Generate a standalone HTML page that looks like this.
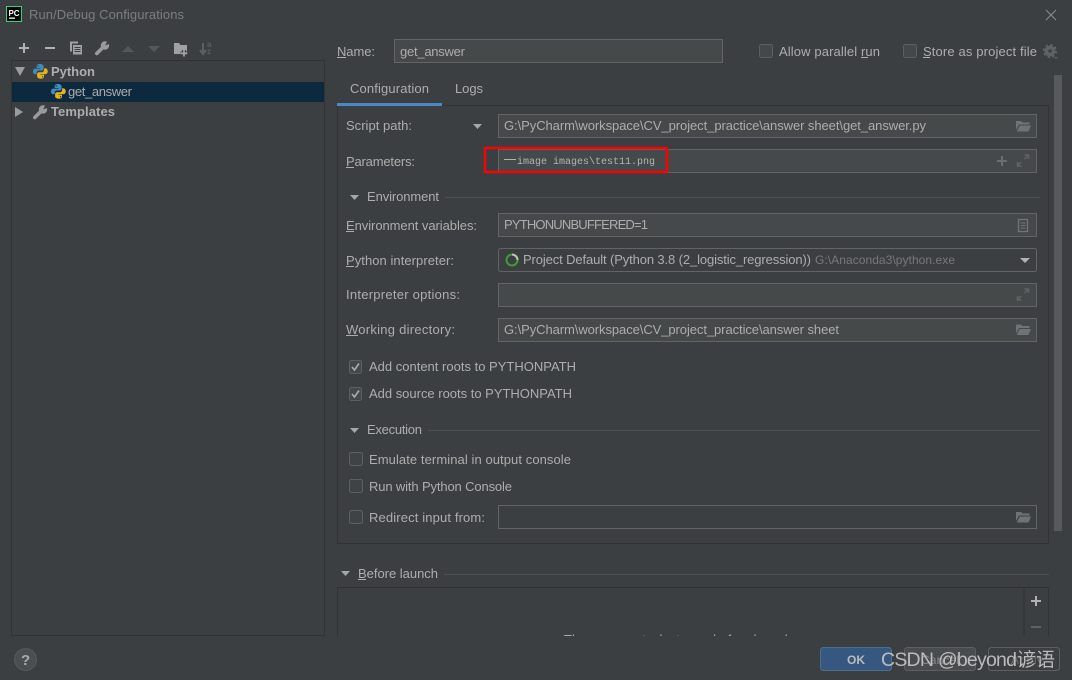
<!DOCTYPE html>
<html><head><meta charset="utf-8"><style>
html,body{margin:0;padding:0;background:#3c3f41;width:1072px;height:680px;overflow:hidden}
svg{display:block}
text{font-family:"Liberation Sans","Noto Sans CJK SC",sans-serif;font-size:13px;fill:#adadad}
.d{fill:#787878}
.b{font-weight:bold}
</style></head><body>
<svg width="1072" height="680" viewBox="0 0 1072 680" xmlns="http://www.w3.org/2000/svg">
<defs>
<clipPath id="cl"><rect x="330" y="580" width="730" height="56"/></clipPath>
<g id="py">
<path d="M7.6 0C4.4 0 4 1.4 4 2.5V4.400h4v.6H2.500C1 5 0 6.200 0 8s1 3.200 2.500 3.200H4V9.300c0-1.300 1-2.300 2.300-2.300h3.200c1.100 0 2-.9 2-2V2.500C11.500 1 9.800 0 7.600 0zM5.600 1.300a.7.700 0 1 1 0 1.500.7.700 0 0 1 0-1.500z" fill="#3d8ebf"/>
<path d="M8.400 16c3.200 0 3.600-1.400 3.600-2.500V11.600H8V11h5.500C15 11 16 9.800 16 8s-1-3.200-2.500-3.200H12v1.900c0 1.300-1 2.300-2.300 2.300H6.500c-1.100 0-2 .9-2 2v2.500C4.500 15 6.200 16 8.400 16zM10.400 14.700a.7.700 0 1 1 0-1.500.7.700 0 0 1 0 1.500z" fill="#e6b31c"/>
</g>
<g id="folder">
<path d="M0 1h5l1.500 1.500h7v2H3L0 10z" fill="#6e7375"/>
<path d="M3.700 5.500H15L12.500 11.500H.8z" fill="#6e7375"/>
</g>
<g id="expand" stroke="#5f6365" stroke-width="1.500" fill="none">
<path d="M8 5L11.500 1.500M8 1h4v4"/><path d="M4.500 8L1 11.500M1 8v4h4"/>
</g>
<g id="wrench">
<path d="M1.800 12.500L8.500 5.800" stroke="#9a9a9a" stroke-width="3.600" stroke-linecap="round" fill="none"/>
<circle cx="10" cy="4.500" r="4.200" fill="#9a9a9a"/>
<path d="M10.200 4.300L12.800 -1L16 2.500z" fill="#3c3f41"/>
</g>
</defs>

<rect width="1072" height="680" fill="#3c3f41"/>

<!-- title bar -->
<rect x="6.500" y="6.500" width="15" height="15" fill="#000" stroke="#21d789"/>
<text x="8.500" y="16" style="font-size:8px;font-weight:bold;fill:#fff" textLength="11">PC</text>
<rect x="9" y="17.500" width="6" height="1.300" fill="#fff"/>
<text x="29" y="19" class="d" textLength="155" style="fill:#7d7d7d">Run/Debug Configurations</text>
<path d="M1046 10l10 10M1056 10l-10 10" stroke="#8a8c8e" stroke-width="1" fill="none"/>

<!-- toolbar -->
<path d="M19 48h10M24 43v10" stroke="#afb1b3" stroke-width="2"/>
<path d="M45 48h10" stroke="#afb1b3" stroke-width="2"/>
<path d="M70 41.500h8v2h-6v8h-2z" fill="#9fa1a3"/>
<rect x="73" y="45" width="9" height="9.500" fill="#9fa1a3"/>
<path d="M74.500 47.500h6M74.500 49.500h6M74.500 51.500h6" stroke="#3c3f41" stroke-width="1"/>
<use href="#wrench" x="95" y="41"/>
<path d="M122 52l6-6 6 6z" fill="#55585a"/>
<path d="M148 46l6 6 6-6z" fill="#55585a"/>
<path d="M174 43h5l1.500 2h6.500v9h-13z" fill="#9fa1a3"/>
<path d="M184 50v7M180.500 53.500h7" stroke="#3c3f41" stroke-width="4"/>
<path d="M184 50v6.500M180.800 53.300h6.500" stroke="#9fa1a3" stroke-width="1.800"/>
<path d="M203 43v10M200 50l3 4 3-4" stroke="#5d6062" stroke-width="2" fill="none"/>
<text x="207" y="47" style="font-size:8px;font-weight:bold;fill:#5d6062">a</text>
<text x="207" y="54" style="font-size:8px;font-weight:bold;fill:#5d6062">z</text>

<!-- tree -->
<rect x="11.500" y="60.500" width="313" height="575" fill="#3c3f41" stroke="#323232"/>
<rect x="12" y="82" width="312" height="20" fill="#0d293e"/>
<path d="M15 67h10l-5 9z" fill="#9a9c9e"/>
<use href="#py" transform="translate(33,64) scale(.92)"/>
<text x="51" y="76" class="b" textLength="44">Python</text>
<use href="#py" transform="translate(51,84) scale(.92)"/>
<text x="68" y="96" textLength="64">get_answer</text>
<path d="M15 107v10l8-5z" fill="#9a9c9e"/>
<use href="#wrench" x="33" y="105"/>
<text x="51" y="116" class="b" textLength="64">Templates</text>

<!-- name row -->
<text x="337" y="56" textLength="38">Name:</text>
<rect x="337" y="57" width="9" height="1" fill="#adadad"/>
<rect x="394.500" y="39.500" width="328" height="23" fill="#45494a" stroke="#646464"/>
<text x="400" y="56" textLength="65">get_answer</text>
<rect x="759.500" y="44.500" width="13" height="13" rx="2" fill="#43494a" stroke="#5e6060"/>
<text x="779" y="56" textLength="101">Allow parallel run</text>
<rect x="861" y="57" width="7" height="1" fill="#adadad"/>
<rect x="903.500" y="44.500" width="13" height="13" rx="2" fill="#43494a" stroke="#5e6060"/>
<text x="923" y="56" textLength="114">Store as project file</text>
<rect x="923" y="57" width="7" height="1" fill="#adadad"/>
<circle cx="1050" cy="51" r="3.600" fill="none" stroke="#5f6264" stroke-width="3.600"/>
<circle cx="1050" cy="51" r="6.200" fill="none" stroke="#5f6264" stroke-width="1.800" stroke-dasharray="2.400 2.470"/>
<path d="M1054 57h4l-2 2z" fill="#5f6264"/>

<!-- tabs and main panel -->
<text x="350" y="93" textLength="79">Configuration</text>
<text x="455" y="93" textLength="28">Logs</text>
<rect x="337.500" y="105.500" width="711" height="438" fill="none" stroke="#323232"/>
<rect x="337" y="103" width="105" height="3" fill="#4a88c7"/>

<!-- scrollbar -->
<rect x="1054" y="75" width="8" height="456" fill="#58595b"/>

<!-- script path -->
<text x="346" y="130" textLength="66">Script path:</text>
<path d="M473 124h9l-4.500 5z" fill="#a4a6a8"/>
<rect x="498.500" y="114.500" width="538" height="23" fill="#45494a" stroke="#646464"/>
<text x="504" y="130" textLength="422">G:\PyCharm\workspace\CV_project_practice\answer sheet\get_answer.py</text>
<use href="#folder" x="1016" y="120"/>

<!-- parameters -->
<text x="346" y="166" textLength="69">Parameters:</text>
<rect x="346" y="167" width="8" height="1" fill="#adadad"/>
<rect x="498.500" y="149.500" width="538" height="23" fill="#45494a" stroke="#646464"/>
<rect x="504" y="159" width="12" height="1" fill="#b4b4b4"/>
<text x="517" y="164" style="font-family:'Liberation Mono',monospace;font-size:10px;fill:#b4b4b4">image images\test11.png</text>
<path d="M997 161h10M1002 156v10" stroke="#6e7375" stroke-width="1.800"/>
<use href="#expand" x="1016.500" y="154"/>
<rect x="485" y="148" width="182" height="24" fill="none" stroke="#f00" stroke-width="2.400"/>

<!-- environment -->
<path d="M350 195h9l-4.500 5z" fill="#a4a6a8"/>
<text x="367" y="201" textLength="72">Environment</text>
<rect x="445" y="197" width="595" height="1" fill="#515151"/>

<text x="346" y="230" textLength="131">Environment variables:</text>
<rect x="346" y="231" width="8" height="1" fill="#adadad"/>
<rect x="498.500" y="213.500" width="538" height="23" fill="#45494a" stroke="#646464"/>
<text x="504" y="229" textLength="144">PYTHONUNBUFFERED=1</text>
<rect x="1018.500" y="219.500" width="9" height="12" fill="none" stroke="#6e7375" stroke-width="1.400"/>
<path d="M1020.500 223h5M1020.500 225.500h5M1020.500 228h5" stroke="#6e7375"/>

<text x="346" y="265" textLength="108">Python interpreter:</text>
<rect x="346" y="266" width="8" height="1" fill="#adadad"/>
<rect x="498.500" y="248.500" width="538" height="23" rx="2" fill="#3c3f41" stroke="#646464"/>
<circle cx="512" cy="260" r="5.500" fill="none" stroke="#3f9a3a" stroke-width="2"/>
<path d="M512 254.500a5.500 5.500 0 0 1 5.500 5.500" fill="none" stroke="#b8c9b4" stroke-width="2"/>
<text x="523" y="264" textLength="288">Project Default (Python 3.8 (2_logistic_regression))</text>
<text x="815" y="264" class="d" textLength="140" style="font-size:12px">G:\Anaconda3\python.exe</text>
<path d="M1020 258h10l-5 5z" fill="#b0b2b4"/>

<text x="346" y="299" textLength="114">Interpreter options:</text>
<rect x="498.500" y="283.500" width="538" height="23" fill="#45494a" stroke="#646464"/>
<use href="#expand" x="1016.500" y="288"/>

<text x="346" y="334" textLength="109">Working directory:</text>
<rect x="346" y="335" width="12" height="1" fill="#adadad"/>
<rect x="498.500" y="318.500" width="538" height="23" fill="#45494a" stroke="#646464"/>
<text x="504" y="334" textLength="335">G:\PyCharm\workspace\CV_project_practice\answer sheet</text>
<use href="#folder" x="1016" y="323.500"/>

<!-- checked -->
<rect x="349.500" y="360.500" width="12" height="13" rx="2" fill="#43494a" stroke="#5e6060"/>
<path d="M352 367l2.500 3 4.500-6.500" fill="none" stroke="#a9a9a9" stroke-width="1.700"/>
<text x="369" y="371" textLength="207">Add content roots to PYTHONPATH</text>
<rect x="349.500" y="387.500" width="12" height="13" rx="2" fill="#43494a" stroke="#5e6060"/>
<path d="M352 394l2.500 3 4.500-6.500" fill="none" stroke="#a9a9a9" stroke-width="1.700"/>
<text x="369" y="398" textLength="203">Add source roots to PYTHONPATH</text>

<!-- execution -->
<path d="M350 428h9l-4.500 5z" fill="#a4a6a8"/>
<text x="367" y="434" textLength="55">Execution</text>
<rect x="428" y="430" width="612" height="1" fill="#515151"/>

<rect x="349.500" y="452.500" width="13" height="13" rx="2" fill="#3f4344" stroke="#5e6060"/>
<text x="369" y="464" textLength="202">Emulate terminal in output console</text>
<rect x="349.500" y="479.500" width="13" height="13" rx="2" fill="#3f4344" stroke="#5e6060"/>
<text x="369" y="491" textLength="143">Run with Python Console</text>
<rect x="349.500" y="510.500" width="13" height="13" rx="2" fill="#3f4344" stroke="#5e6060"/>
<text x="369" y="522" textLength="116">Redirect input from:</text>
<rect x="498.500" y="505.500" width="538" height="23" fill="#3c3f41" stroke="#646464"/>
<use href="#folder" x="1016" y="511"/>

<!-- before launch -->
<path d="M341 571h9l-4.500 5z" fill="#a4a6a8"/>
<text x="358" y="578" textLength="80">Before launch</text>
<rect x="358" y="579" width="8" height="1" fill="#adadad"/>
<rect x="444" y="574" width="605" height="1" fill="#515151"/>
<g clip-path="url(#cl)">
<rect x="337.500" y="587.500" width="711" height="80" fill="none" stroke="#323232"/>
<rect x="1023.500" y="588" width="1" height="60" fill="#323232"/>
<text x="564" y="644" textLength="228">There are no tasks to run before launch</text>
</g>
<path d="M1031 601h10M1036 596v10" stroke="#afb1b3" stroke-width="2"/>
<path d="M1031 627h10" stroke="#5e6163" stroke-width="2"/>

<!-- help -->
<circle cx="25.500" cy="659.500" r="11" fill="#4a4e50" stroke="#565a5c"/>
<text x="21" y="665" class="b" style="font-size:15px;fill:#a9abad">?</text>

<!-- buttons -->
<rect x="820.500" y="647.500" width="71" height="23" rx="3" fill="#365880" stroke="#4c708c"/>
<text x="847" y="664" class="b" textLength="18" style="fill:#bbb;font-size:12px">OK</text>
<rect x="904.500" y="647.500" width="71" height="23" rx="3" fill="#484c4e" stroke="#5e6060"/>
<text x="921" y="664" textLength="38" style="fill:#8a8a8a;font-size:12px">Cancel</text>
<rect x="988.500" y="647.500" width="71" height="23" rx="3" fill="#3c3f41" stroke="#5e6060"/>
<text x="1011" y="664" textLength="32" style="fill:#6a6a6a;font-size:12px">Apply</text>

<!-- watermark -->
<text x="881" y="666" textLength="136" style="font-size:19.500px;fill:#cfcfcf;fill-opacity:.85">CSDN @beyond</text>
<text x="1017" y="666" style="font-size:19px;fill:#cfcfcf;fill-opacity:.85">谚语</text>
</svg>
</body></html>
